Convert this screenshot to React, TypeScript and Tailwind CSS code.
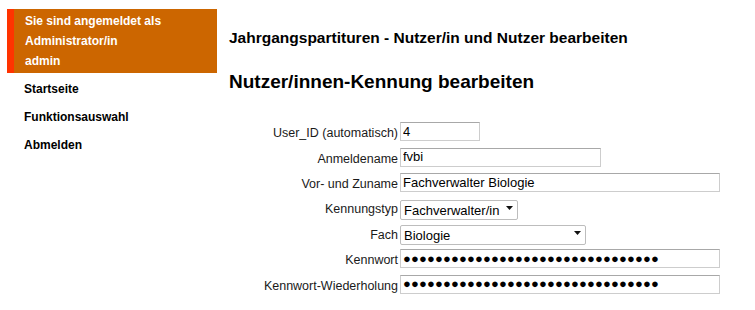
import React from "react";

const DOTS = "●".repeat(32);

const inputBase =
  "h-[19px] border border-[#cdcdcd] border-t-[#a8a8a8] bg-white px-[2px] text-[13px] text-black outline-none font-['Liberation_Sans',Arial,sans-serif]";

const Row = ({ label, children }: { label: string; children: React.ReactNode }) => (
  <div className="flex h-[25.4px] items-center">
    <div className="mt-[4px] w-[171px] pr-[2px] text-right text-[12.5px] text-[#1a1a1a]">{label}</div>
    {children}
  </div>
);

const Select = ({ value, width }: { value: string; width: string }) => (
  <div className={`relative h-[20px] ${width}`}>
    <select
      className="h-full w-full appearance-none rounded-[2px] border border-[#bdbdbd] bg-white pl-[3px] text-[13px] text-black outline-none font-['Liberation_Sans',Arial,sans-serif]"
      defaultValue={value}
    >
      <option>{value}</option>
    </select>
    <svg
      className="pointer-events-none absolute right-[5px] top-[8px]"
      width="7"
      height="4"
      viewBox="0 0 7 4"
    >
      <path d="M0 0h7L3.5 4z" fill="#111" />
    </svg>
  </div>
);

export default function App() {
  return (
    <div className="flex min-h-[310px] w-[755px] bg-white font-['Liberation_Sans',Arial,sans-serif]">
      {/* sidebar */}
      <div className="ml-[7px] mt-[9px] w-[210px]">
        <div className="border-l-[7px] border-[#ff3300] bg-[#cc6600] py-[2px] pl-[11px] text-[12px] font-bold leading-[20px] text-white">
          <div>Sie sind angemeldet als</div>
          <div>Administrator/in</div>
          <div>admin</div>
        </div>
        <nav className="mt-[2px] pl-[17px] text-[12px] font-bold text-black">
          <div className="flex h-[28px] items-center">Startseite</div>
          <div className="flex h-[28px] items-center">Funktionsauswahl</div>
          <div className="flex h-[28px] items-center">Abmelden</div>
        </nav>
      </div>

      {/* main */}
      <div className="ml-[12px] flex-1 pt-[28px]">
        <h1 className="text-[15.5px] font-bold leading-[20px] text-black">
          Jahrgangspartituren - Nutzer/in und Nutzer bearbeiten
        </h1>
        <h2 className="mt-[22px] text-[19px] font-bold leading-[24px] text-black">
          Nutzer/innen-Kennung bearbeiten
        </h2>

        <form className="mt-[25px]">
          <Row label="User_ID (automatisch)">
            <input className={`${inputBase} w-[80px]`} defaultValue="4" readOnly />
          </Row>
          <Row label="Anmeldename">
            <input className={`${inputBase} w-[201px]`} defaultValue="fvbi" />
          </Row>
          <Row label="Vor- und Zuname">
            <input className={`${inputBase} w-[320px]`} defaultValue="Fachverwalter Biologie" />
          </Row>
          <Row label="Kennungstyp">
            <Select value="Fachverwalter/in" width="w-[118px]" />
          </Row>
          <Row label="Fach">
            <Select value="Biologie" width="w-[186px]" />
          </Row>
          <Row label="Kennwort">
            <input
              className={`${inputBase} w-[320px] text-[10px] tracking-[0.15px] font-['DejaVu_Sans',sans-serif]`}
              defaultValue={DOTS}
            />
          </Row>
          <Row label="Kennwort-Wiederholung">
            <input
              className={`${inputBase} w-[320px] text-[10px] tracking-[0.15px] font-['DejaVu_Sans',sans-serif]`}
              defaultValue={DOTS}
            />
          </Row>
        </form>
      </div>
    </div>
  );
}
